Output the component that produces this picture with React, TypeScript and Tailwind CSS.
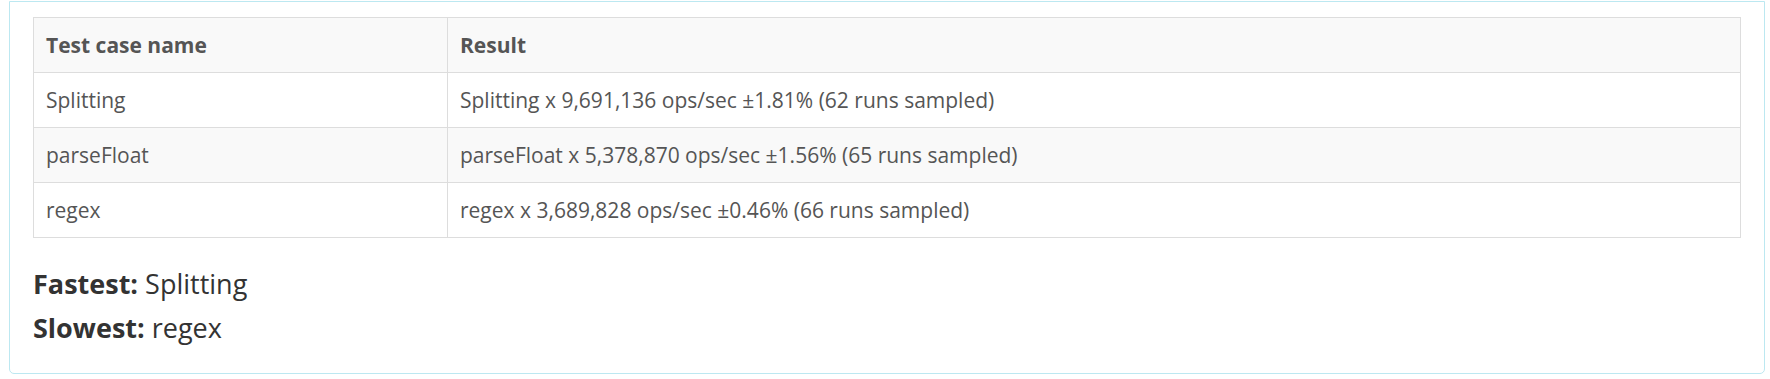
const results = [
  { name: 'Splitting', result: 'Splitting x 9,691,136 ops/sec ±1.81% (62 runs sampled)' },
  { name: 'parseFloat', result: 'parseFloat x 5,378,870 ops/sec ±1.56% (65 runs sampled)' },
  { name: 'regex', result: 'regex x 3,689,828 ops/sec ±0.46% (66 runs sampled)' },
];

export default function App() {
  return (
    <div className="w-[1770px] h-[379px] bg-white font-['Open_Sans',sans-serif]">
      <div className="ml-[9px] mt-px w-[1756px] border border-[#bce8f1] rounded-b-[5px] px-[23px] pt-[15px] pb-[23px]">
        {/* Results table */}
        <table className="w-full border-collapse border border-[#dddddd] text-[21px] leading-[30px] text-[#555555]">
          <thead>
            <tr className="bg-[#f9f9f9]">
              <th className="w-[414px] border border-[#dddddd] px-3 py-3 text-left font-bold">
                Test case name
              </th>
              <th className="border border-[#dddddd] px-3 py-3 text-left font-bold">Result</th>
            </tr>
          </thead>
          <tbody>
            {results.map((row, i) => (
              <tr key={row.name} className={i % 2 === 1 ? 'bg-[#f9f9f9]' : 'bg-white'}>
                <td className="border border-[#dddddd] px-3 py-3">{row.name}</td>
                <td className="border border-[#dddddd] px-3 py-3">{row.result}</td>
              </tr>
            ))}
          </tbody>
        </table>

        {/* Summary */}
        <div className="mt-[24px] text-[27px] leading-[44px] text-[#333333]">
          <div>
            <span className="font-bold">Fastest:</span> Splitting
          </div>
          <div>
            <span className="font-bold">Slowest:</span> regex
          </div>
        </div>
      </div>
    </div>
  );
}
